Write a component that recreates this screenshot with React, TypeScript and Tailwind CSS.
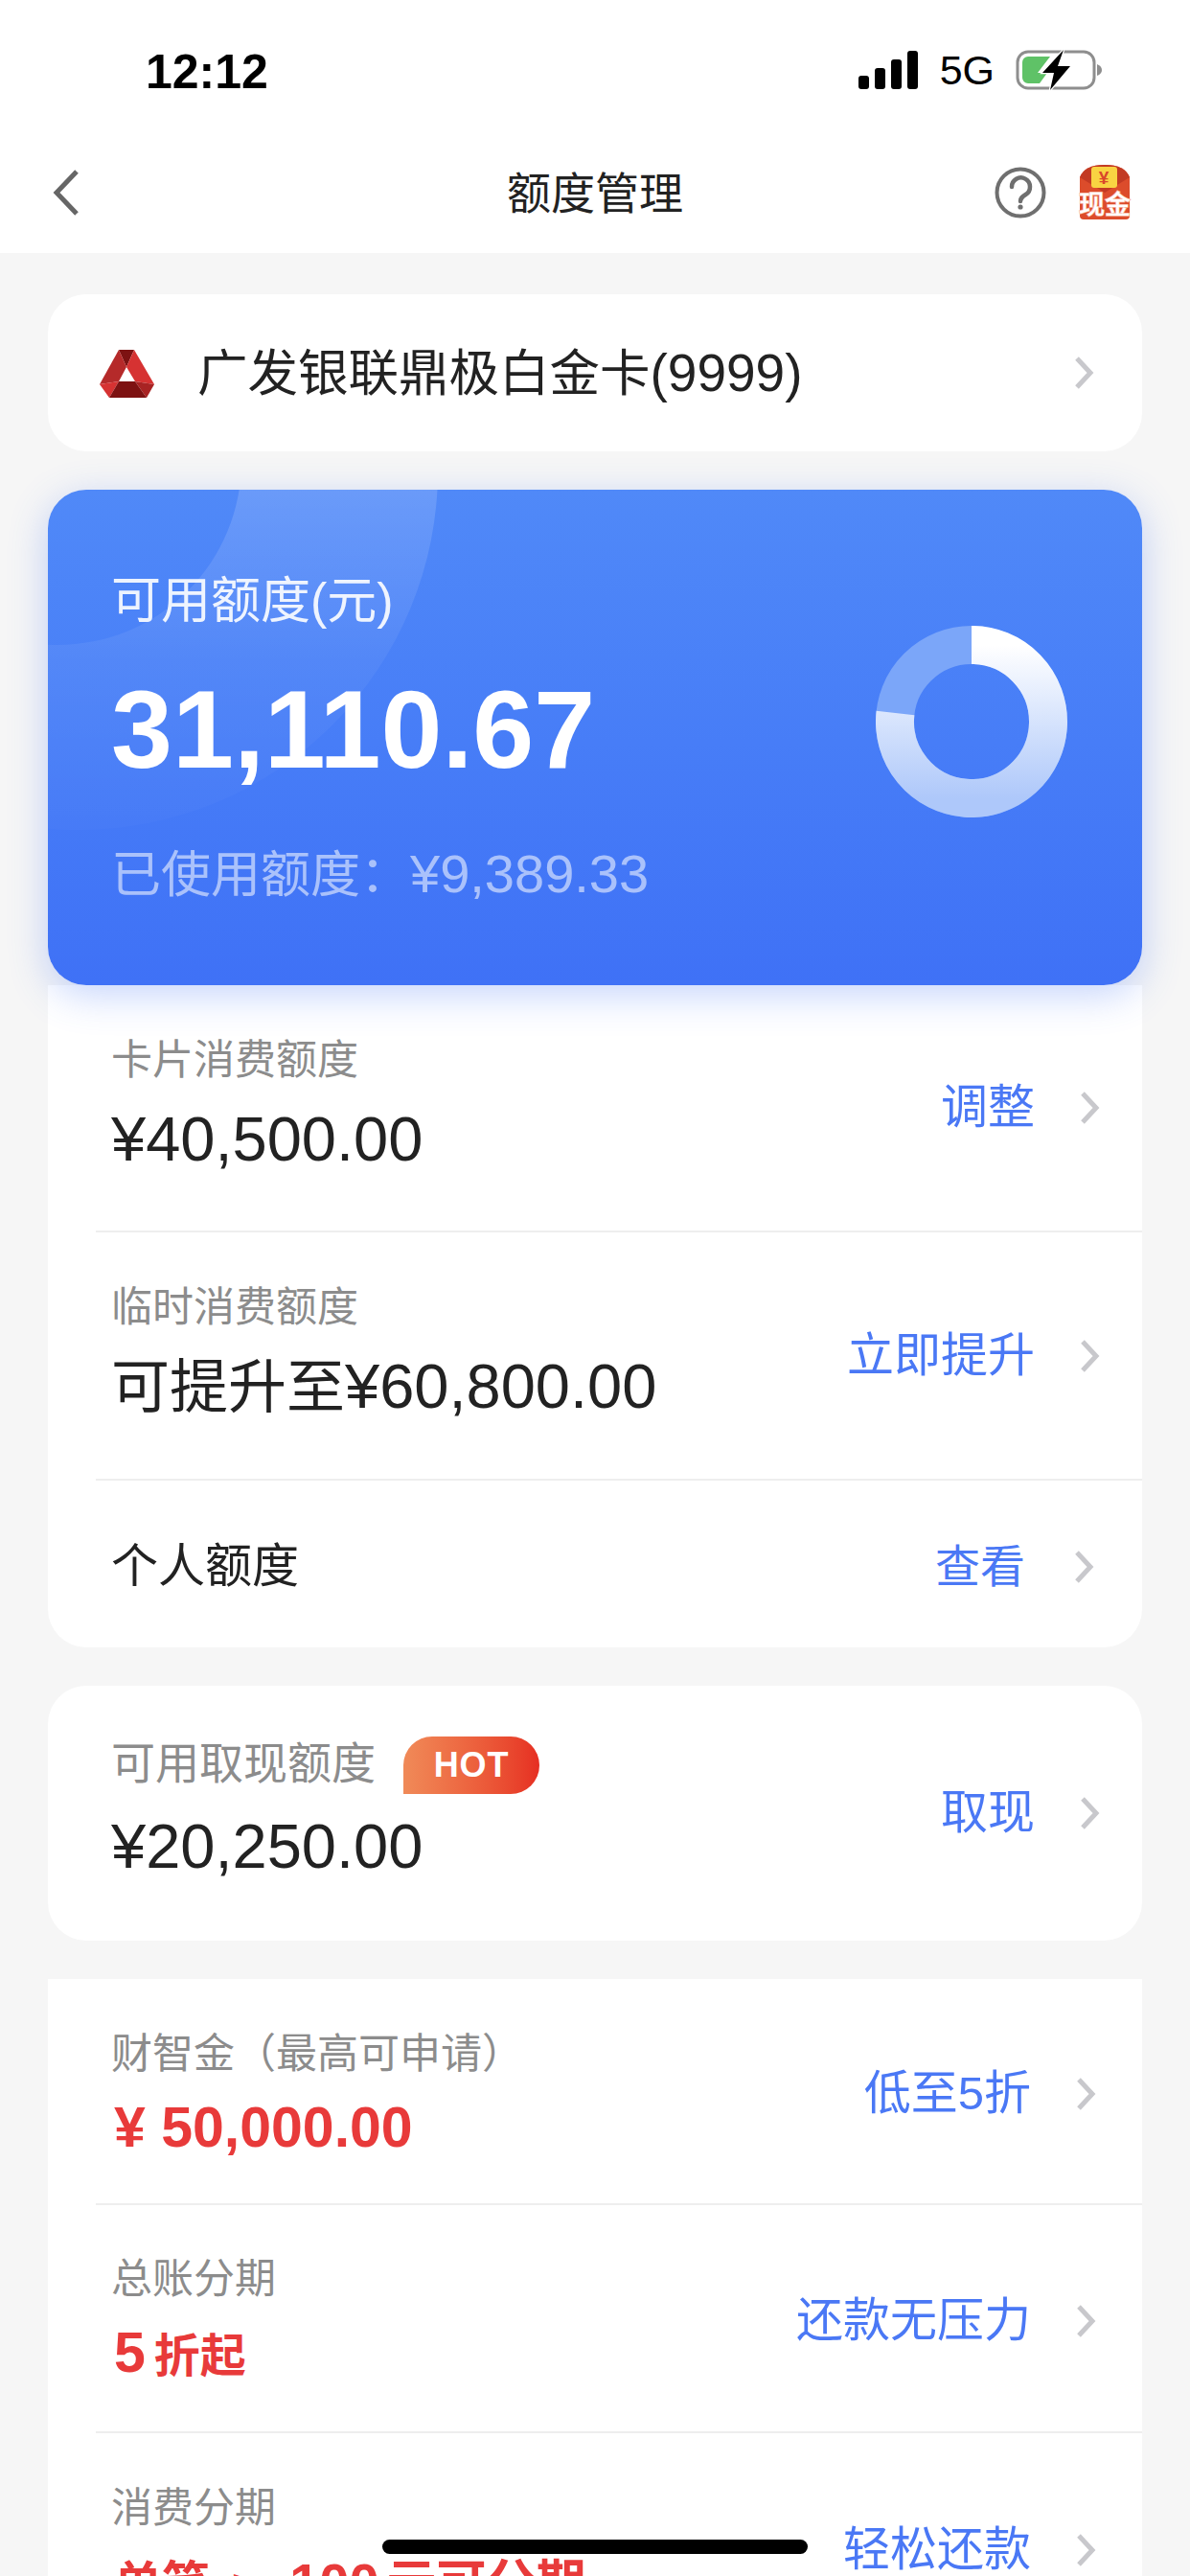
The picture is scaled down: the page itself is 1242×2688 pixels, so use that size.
import type { ReactNode } from "react";

const SANS = "font-['Liberation_Sans','Noto_Sans_CJK_SC',sans-serif]";

function Chevron({ className = "" }: { className?: string }) {
  return (
    <svg width="22" height="36" viewBox="0 0 22 36" className={className}>
      <polyline points="4,3 18,18 4,33" fill="none" stroke="#c8c8cc" strokeWidth="5" />
    </svg>
  );
}

function StatusBar() {
  return (
    <div className="flex h-[150px] items-center justify-between pl-[152px] pr-[92px]">
      <span className="text-[50px] font-bold leading-none text-black">12:12</span>
      <div className="flex items-center pb-[4px]">
        <svg width="64" height="40" viewBox="0 0 64 40" fill="#000">
          <rect x="0" y="26" width="11" height="14" rx="3" />
          <rect x="17" y="18" width="11" height="22" rx="3" />
          <rect x="34" y="9" width="11" height="31" rx="3" />
          <rect x="51" y="0" width="11" height="40" rx="3" />
        </svg>
        <span className="ml-[21px] text-[43px] leading-none text-black">5G</span>
        <svg width="90" height="44" viewBox="0 0 90 44" className="ml-[22px]">
          <rect x="2" y="3" width="80" height="38" rx="11" fill="none" stroke="#8e8e8e" strokeWidth="3" />
          <path d="M7 14 a6 6 0 0 1 6 -6 h23 l-13 17 h10 l-8 11 h-12 a6 6 0 0 1 -6 -6 z" fill="#5fc267" />
          <path d="M85 16 q5 2 5 6 q0 4 -5 6 z" fill="#8e8e8e" />
          <path d="M50 1 L28 25 H40 L36 43 L57 18 H44 Z" fill="#000" stroke="#fff" strokeWidth="2.5" paintOrder="stroke" />
        </svg>
      </div>
    </div>
  );
}

function NavBar() {
  return (
    <div className="relative flex h-[114px] items-center justify-between pl-[54px] pr-[60px] pb-[12px]">
      <svg width="30" height="50" viewBox="0 0 30 50">
        <polyline points="26,3 5,25 26,47" fill="none" stroke="#666666" strokeWidth="5" />
      </svg>
      <span className="absolute left-0 right-0 top-[22px] text-center text-[46px] leading-[60px] text-[#222222]">额度管理</span>
      <div className="flex items-center gap-[32px]">
        <svg width="54" height="54" viewBox="0 0 54 54" fill="none" stroke="#6f6f6f">
          <circle cx="27" cy="27" r="24.5" strokeWidth="4" />
          <path d="M18 21 a9.5 9.5 0 1 1 14.5 8 c-3.5 2.2 -5.5 3.5 -5.5 7" strokeWidth="4.5" strokeLinecap="round" />
          <circle cx="27" cy="42" r="2.6" fill="#6f6f6f" stroke="none" />
        </svg>
        <svg width="58" height="60" viewBox="0 0 58 60">
          <path d="M3 14 Q8 1 29 1 Q50 1 55 14 V54 Q55 58 51 58 H7 Q3 58 3 54 Z" fill="#dc4c2b" />
          <path d="M3 14 Q8 1 29 1 Q50 1 55 14 L29 30 Z" fill="#c23a23" />
          <rect x="15" y="3" width="27" height="22" rx="3" fill="#f9d342" />
          <text x="28" y="21" textAnchor="middle" fontSize="19" fontWeight="700" fill="#d9472b" fontFamily="Liberation Sans">¥</text>
          <text x="29" y="52" textAnchor="middle" fontSize="27" fontWeight="500" fill="#fff" stroke="#f6b49f" strokeWidth="1.5" paintOrder="stroke" fontFamily="Noto Sans CJK SC">现金</text>
        </svg>
      </div>
    </div>
  );
}

function Logo() {
  return (
    <svg width="58" height="52" viewBox="0 0 58 52" className="ml-[2px] mt-[4px]">
      <polygon points="20,0 36,0 28,18" fill="#7d1212" />
      <polygon points="20,0 28,18 20,33 0,36" fill="#b52a2a" />
      <polygon points="36,0 57,36 37,33 28,18" fill="#d63232" />
      <polygon points="0,36 20,33 10,50" fill="#d63232" />
      <polygon points="57,36 37,33 49,50" fill="#a82323" />
      <polygon points="20,33 37,33 49,50 10,50" fill="#7d1212" />
    </svg>
  );
}

function Donut() {
  return (
    <svg width="200" height="200" viewBox="0 0 200 200" className="mb-[34px]">
      <defs>
        <linearGradient id="ring" x1="0" y1="0" x2="0" y2="1">
          <stop offset="0" stopColor="#ffffff" />
          <stop offset="1" stopColor="#aec8fa" />
        </linearGradient>
      </defs>
      <circle cx="100" cy="100" r="80" fill="none" stroke="#7ba6f9" strokeWidth="40" />
      <path d="M100 20 A80 80 0 1 1 20.5 91" fill="none" stroke="url(#ring)" strokeWidth="40" />
    </svg>
  );
}

// the pale ring in the blue card's corner, fades out downwards
function CardRing() {
  return (
    <svg width="420" height="370" viewBox="0 0 420 370" className="absolute left-0 top-0">
      <defs>
        <linearGradient id="halo" gradientUnits="userSpaceOnUse" x1="0" y1="0" x2="0" y2="360">
          <stop offset="0" stopColor="#ffffff" stopOpacity="0.15" />
          <stop offset="0.5" stopColor="#ffffff" stopOpacity="0.05" />
          <stop offset="1" stopColor="#ffffff" stopOpacity="0.015" />
        </linearGradient>
      </defs>
      <path
        fillRule="evenodd"
        fill="url(#halo)"
        d="M-343 -20 A375 375 0 1 0 407 -20 A375 375 0 1 0 -343 -20 Z M-182 -30 A192 192 0 1 0 202 -30 A192 192 0 1 0 -182 -30 Z"
      />
    </svg>
  );
}

function Row(props: {
  label: ReactNode;
  value: ReactNode;
  action: string;
  red?: boolean;
  divider?: boolean;
  height: string;
}) {
  const padding = props.red ? "pr-[48px] pt-[6px]" : "pr-[44px]";
  return (
    <div className={`ml-[50px] flex items-center justify-between pl-[16px] ${padding} ${props.height} ${props.divider ? "border-b-2 border-[#eeeeee]" : ""}`}>
      {props.red ? (
        <div className="flex flex-col">
          <div className="text-[43px] leading-[56px] text-[#8c8c8c]">{props.label}</div>
          <div className="ml-[3px] mt-[14px] text-[59px] font-bold leading-[70px] text-[#e83a3a]">{props.value}</div>
        </div>
      ) : (
        <div className="flex flex-col pb-[10px]">
          <div className="text-[43px] leading-[56px] text-[#8c8c8c]">{props.label}</div>
          <div className="mt-[20px] text-[65px] leading-[70px] text-[#222222]">{props.value}</div>
        </div>
      )}
      <div className="flex items-center">
        <span className="text-[49px] text-[#4a78f5]">{props.action}</span>
        <Chevron className="ml-[46px]" />
      </div>
    </div>
  );
}

export default function App() {
  return (
    <div className={`relative h-[2688px] w-[1242px] overflow-hidden bg-[#f6f6f6] ${SANS}`}>
      <div className="bg-white">
        <StatusBar />
        <NavBar />
      </div>

      <div className="px-[50px] pt-[43px]">
        <div className="flex h-[164px] items-center justify-between rounded-[40px] bg-white pl-[52px] pr-[50px]">
          <div className="flex items-center">
            <Logo />
            <span className="ml-[44px] text-[52.5px] text-[#222222]">
              广发银联鼎极白金卡<span className="text-[55px]">(9999)</span>
            </span>
          </div>
          <Chevron />
        </div>

        <div className="relative z-10 mt-[40px] flex h-[517px] items-center justify-between overflow-hidden rounded-[40px] bg-gradient-to-b from-[#5089f8] to-[#3f71f6] pl-[66px] pr-[78px] shadow-[0_10px_40px_rgba(63,113,246,0.3)]">
          <CardRing />
          <div className="relative flex flex-col">
            <span className="text-[52px] leading-[64px] text-white/90">可用额度(元)</span>
            <span className="mt-[37px] text-[115px] font-bold leading-[130px] text-white">31,110.67</span>
            <span className="mt-[54px] text-[52px] leading-[64px] text-white/55">
              已使用额度：<span className="text-[56px]">¥9,389.33</span>
            </span>
          </div>
          <Donut />
        </div>

        <div className="rounded-b-[40px] bg-white">
          <Row label="卡片消费额度" value="¥40,500.00" action="调整" height="h-[258px]" divider />
          <Row
            label="临时消费额度"
            value={<><span className="text-[61px]">可提升至</span>¥60,800.00</>}
            action="立即提升"
            height="h-[259px]"
            divider
          />
          <div className="ml-[50px] flex h-[174px] items-center justify-between pl-[16px] pr-[50px] pt-[6px]">
            <span className="text-[49px] text-[#222222]">个人额度</span>
            <div className="flex items-center">
              <span className="text-[47px] text-[#4a78f5]">查看</span>
              <Chevron className="ml-[50px]" />
            </div>
          </div>
        </div>

        <div className="mt-[40px] rounded-[40px] bg-white">
          <Row
            label={
              <span className="flex items-center text-[46px]">
                <span className="pb-[4px]">可用取现额度</span>
                <span className="ml-[29px] flex h-[60px] w-[142px] items-center justify-center rounded-r-[30px] rounded-tl-[30px] bg-gradient-to-r from-[#f08a58] to-[#e62e22] text-[36px] font-bold tracking-wide text-white">HOT</span>
              </span>
            }
            value="¥20,250.00"
            action="取现"
            height="h-[266px]"
          />
        </div>

        <div className="mt-[40px] bg-white">
          <Row label="财智金（最高可申请）" value="¥ 50,000.00" action="低至5折" height="h-[236px]" red divider />
          <Row
            label="总账分期"
            value={<>5<span className="ml-[9px] text-[48px]">折起</span></>}
            action="还款无压力"
            height="h-[238px]"
            red
            divider
          />
          <Row
            label="消费分期"
            value={<><span className="text-[50px]">单笔</span><span className="ml-[24px] mr-[35px] text-[44px]">≥</span><span className="text-[56px]">100</span><span className="ml-[8px] text-[52px]">元可分期</span></>}
            action="轻松还款"
            height="h-[238px]"
            red
          />
        </div>
      </div>

      <div className="absolute bottom-[23px] left-[399px] h-[15px] w-[444px] rounded-full bg-black" />
    </div>
  );
}
